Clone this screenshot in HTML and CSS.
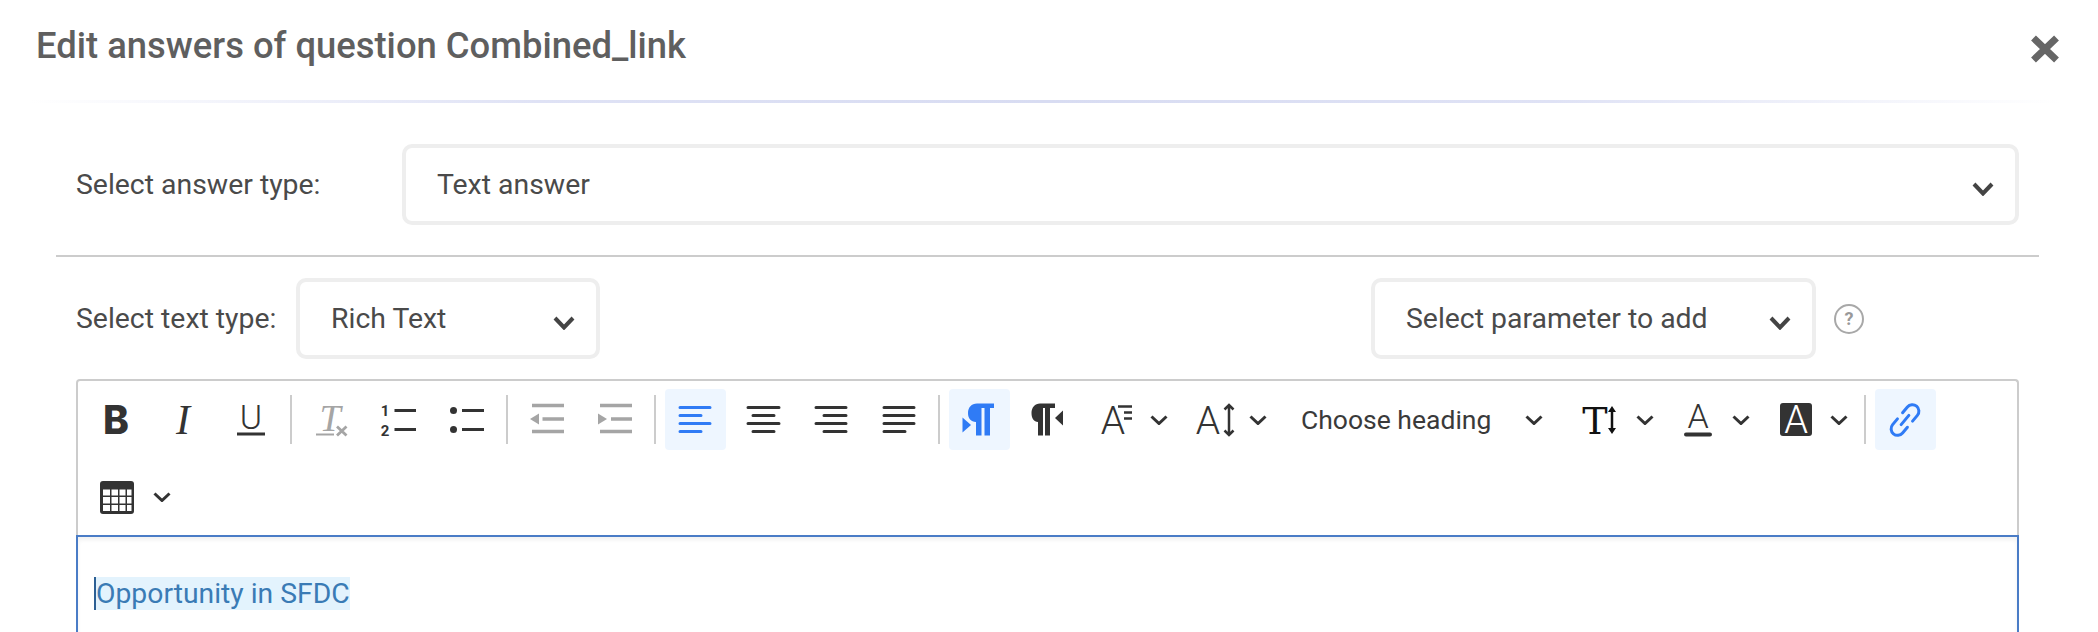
FILE: index.html
```html
<!DOCTYPE html>
<html lang="en">
<head>
    <meta charset="UTF-8">
    <title>Edit answers</title>
    <link rel="stylesheet" href="styles.css">
</head>
<body>
    <svg class="defs" width="0" height="0">
        <symbol id="chev" viewBox="0 0 18 10"><path d="M1.5 1.5L9 8.5L16.5 1.5" fill="none" stroke="#333" stroke-width="3"/></symbol>
    </svg>
    <div class="modal">
        <div class="modal_head">
            <h1 class="title">Edit answers of question Combined_link</h1>
            <svg class="close" viewBox="0 0 30 28"><path d="M3.5 3L26.500 25M26.500 3L3.500 25" stroke="#666" stroke-width="7"/></svg>
        </div>
        <div class="modal_body">
            <div class="row row_answer">
                <label class="label label_answer">Select answer type:</label>
                <div class="select select_full"><span>Text answer</span><svg class="sel_chev" viewBox="0 0 22 14"><path d="M2 2L11 11.500L20 2" fill="none" stroke="#444" stroke-width="4"/></svg></div>
            </div>
            <hr class="divider">
            <div class="row row_text">
                <label class="label label_text">Select text type:</label>
                <div class="select select_type"><span>Rich Text</span><svg class="sel_chev" viewBox="0 0 22 14"><path d="M2 2L11 11.500L20 2" fill="none" stroke="#444" stroke-width="4"/></svg></div>
                <div class="select select_param"><span>Select parameter to add</span><svg class="sel_chev" viewBox="0 0 22 14"><path d="M2 2L11 11.500L20 2" fill="none" stroke="#444" stroke-width="4"/></svg></div>
                <span class="help">?</span>
            </div>
            <div class="editor">
                <div class="toolbar">
                    <!-- basic styles -->
                    <div class="btn"><svg viewBox="0 0 40 40"><text class="t_bold" x="21" y="33.500">B</text></svg></div>
                    <div class="btn"><svg viewBox="0 0 40 40"><text class="t_ital" x="20" y="33.500">I</text></svg></div>
                    <div class="btn"><svg viewBox="0 0 40 40"><text class="t_under" x="20" y="28.500">U</text><rect x="6" y="32.500" width="28" height="3" fill="#333"/></svg></div>
                    <i class="sep"></i>
                    <div class="btn"><svg viewBox="0 0 40 40"><text class="t_clear" x="19" y="30.500">T</text><rect x="5" y="33.500" width="18" height="2" fill="#a5a5a5"/><path d="M26 26.500L35.500 35.500M35.500 26.500L26 35.500" stroke="#a5a5a5" stroke-width="2.800"/></svg></div>
                    <div class="btn"><svg viewBox="0 0 40 40"><text class="t_num" x="6" y="16">1</text><text class="t_num" x="6" y="36">2</text><path d="M15.500 10.500H37M15.500 29.500H37" stroke="#333" stroke-width="3"/></svg></div>
                    <div class="btn"><svg viewBox="0 0 40 40"><circle cx="6.500" cy="10.500" r="3.500" fill="#333"/><circle cx="6.500" cy="29.500" r="3.500" fill="#333"/><path d="M15 10.500H37M15 29.500H37" stroke="#333" stroke-width="3"/></svg></div>
                    <i class="sep"></i>
                    <!-- indent -->
                    <div class="btn"><svg viewBox="0 0 40 40"><path d="M5 5.500H37M15.500 19H37M5 31.500H37" stroke="#a5a5a5" stroke-width="3.500"/><path d="M3 19L12 13.500V24.500Z" fill="#a5a5a5"/></svg></div>
                    <div class="btn"><svg viewBox="0 0 40 40"><path d="M5 5.500H37M16 19H37M5 31.500H37" stroke="#a5a5a5" stroke-width="3.500"/><path d="M12 19L3 13.500V24.500Z" fill="#a5a5a5"/></svg></div>
                    <i class="sep"></i>
                    <!-- align -->
                    <div class="btn on"><svg viewBox="0 0 40 40"><path d="M5 7.500H35M5 15.500H26M5 23.500H35M5 31.500H26" stroke="#2f7bf5" stroke-width="3" stroke-linecap="round"/></svg></div>
                    <div class="btn"><svg viewBox="0 0 40 40"><path d="M5 7.500H36M10 15.500H31M5 23.500H36M10 31.500H31" stroke="#333" stroke-width="3" stroke-linecap="round"/></svg></div>
                    <div class="btn"><svg viewBox="0 0 40 40"><path d="M5 7.500H35M13 15.500H35M5 23.500H35M13 31.500H35" stroke="#333" stroke-width="3" stroke-linecap="round"/></svg></div>
                    <div class="btn"><svg viewBox="0 0 40 40"><path d="M5 7.500H35M5 15.500H35M5 23.500H35M5 31.500H26" stroke="#333" stroke-width="3" stroke-linecap="round"/></svg></div>
                    <i class="sep"></i>
                    <!-- direction -->
                    <div class="btn on"><svg viewBox="0 0 40 40"><path d="M35 3.500V8H31V35.500H25.500V8H22.500V35.500H17V22C12 22 9 18.500 9 13C9 7.500 12.500 3.500 18 3.500Z" fill="#2f7bf5"/><path d="M12 25L3.500 17.500V32.500Z" fill="#2f7bf5"/></svg></div>
                    <div class="btn"><svg viewBox="0 0 40 40"><path d="M28 3.500V8H23V35.500H18V8H16V35.500H11V22C7 22 4.500 18.500 4.500 13C4.500 7.500 8 3.500 13 3.500Z" fill="#333"/><path d="M28 18L36 10.500V25.500Z" fill="#333"/></svg></div>
                    <!-- dropdowns -->
                    <div class="dd dd_font"><svg class="ic40" viewBox="0 0 40 40"><text class="t_a" x="14" y="33.500">A</text><path d="M19 6.500H33M25 12.500H33M25 18.500H33" stroke="#333" stroke-width="2.500"/></svg><svg class="chev"><use href="#chev"/></svg></div>
                    <div class="dd dd_size"><svg class="ic44" viewBox="0 0 44 40"><text class="t_a" x="13" y="33.500">A</text><path d="M34 7V33M29.500 9.500L34 5L38.500 9.500M29.500 30.500L34 35L38.500 30.500" fill="none" stroke="#333" stroke-width="2.500"/></svg><svg class="chev"><use href="#chev"/></svg></div>
                    <div class="dd dd_head"><span>Choose heading</span><svg class="chev"><use href="#chev"/></svg></div>
                    <div class="dd dd_line"><svg class="ic36" viewBox="0 0 36 40"><text class="t_slab" x="12" y="33.500">T</text><path d="M29 10V30" stroke="#111" stroke-width="2.500"/><path d="M29 6L33 12H25ZM29 34L33 28H25Z" fill="#111"/></svg><svg class="chev"><use href="#chev"/></svg></div>
                    <div class="dd dd_color"><svg class="ic30" viewBox="0 0 30 40"><text class="t_a2" x="14" y="28">A</text><rect x="0" y="32.500" width="28" height="4" rx="2" fill="#333"/></svg><svg class="chev"><use href="#chev"/></svg></div>
                    <div class="dd dd_back"><svg class="ic32" viewBox="0 0 32 40"><rect x="0" y="3" width="32" height="33" rx="3" fill="#333"/><text class="t_a3" x="16" y="33">A</text></svg><svg class="chev"><use href="#chev"/></svg></div>
                    <i class="sep sep_link"></i>
                    <div class="btn on"><svg viewBox="0 0 40 40"><g transform="rotate(40 20 20)" fill="none" stroke="#2f7bf5" stroke-width="3" stroke-linecap="round"><path d="M13.500 16V8.500a6.500 6.500 0 0 1 13 0V16"/><path d="M13.500 24V31.500a6.500 6.500 0 0 0 13 0V24"/><path d="M20 14V26"/></g></svg></div>
                    <!-- wraps to second line -->
                    <div class="dd dd_table"><svg class="ic36" viewBox="0 0 36 40"><rect x="1" y="4" width="34" height="33" rx="3" fill="#333"/><path d="M4 12.500H11V18.500H4ZM12.500 12.500H19V18.500H12.500ZM20.500 12.500H26.500V18.500H20.500ZM28 12.500H32.500V18.500H28ZM4 20H11V26.500H4ZM12.500 20H19V26.500H12.500ZM20.500 20H26.500V26.500H20.500ZM28 20H32.500V26.500H28ZM4 28H11V34H4ZM12.500 28H19V34H12.500ZM20.500 28H26.500V34H20.500ZM28 28H32.500V34H28Z" fill="#fff"/></svg><svg class="chev"><use href="#chev"/></svg></div>
                </div>
                <div class="content">
                    <p><span class="caret"></span><a class="link" href="#">Opportunity in SFDC</a></p>
                </div>
            </div>
        </div>
    </div>
</body>
</html>
```

FILE: styles.css
```css
*{margin:0;padding:0;box-sizing:border-box;}
html,body{height:632px;overflow:hidden;background:#fff;}
body{font-family:Roboto,"Liberation Sans",sans-serif;color:#444;}
.defs{position:absolute;}

.modal_head{display:flex;justify-content:space-between;align-items:flex-start;height:103px;margin:0 38px 0 30px;padding:23px 0 0 6px;border-bottom:3px solid;border-image:linear-gradient(to right,rgba(216,220,242,0),#dfe2f5 25%,#d8dcf2 50%,#dfe2f5 75%,rgba(216,220,242,0)) 1;}
.title{font-size:36.400px;line-height:46px;font-weight:500;color:#5f5f5f;}
.close{width:30px;height:28px;margin-top:12px;}

.modal_body{margin:0 59px 0 56px;}
.row{display:flex;align-items:center;padding:0 20px;}
.row_answer{margin-top:41px;}
.row_text{margin-top:21px;}
.label{font-size:28.400px;color:#4a4a4a;white-space:nowrap;}
.label_answer{width:326px;}
.label_text{width:220px;}
.select{display:flex;justify-content:space-between;align-items:center;height:81px;padding:0 21px 0 31px;border:4px solid #eee;border-radius:10px;background:#fff;font-size:28.400px;color:#4a4a4a;}
.select_full{flex:1;}
.select_type{width:304px;}
.select_param{width:445px;margin-left:auto;}
.sel_chev{width:22px;height:14px;margin-top:8px;}
.help{display:flex;justify-content:center;align-items:center;width:30px;height:30px;margin:0 155px 0 18px;border:2.500px solid #a8a8a8;border-radius:50%;font-size:18px;font-weight:700;color:#999;}
.divider{height:2px;margin-top:30px;border:0;background:#ccc;}

.editor{margin:20px 20px 0 20px;}
.toolbar{display:flex;flex-wrap:wrap;align-items:center;row-gap:16px;padding:8px 3px 8px;border:2px solid #ccc;border-bottom:0;border-radius:4px 4px 0 0;}
.btn{display:flex;justify-content:center;align-items:center;width:61px;height:61px;margin:0 3.500px;border-radius:4px;}
.btn.on{background:#eef6ff;}
.btn svg,.ic40{width:40px;height:40px;}
.toolbar svg{overflow:visible;}
.ic44{width:44px;height:40px;}
.ic36{width:36px;height:40px;}
.ic30{width:30px;height:40px;}
.ic32{width:32px;height:40px;}
.sep{width:2px;height:49px;margin:0 5px;background:#ccc;}
.sep_link{margin-left:16px;}

.dd{display:flex;align-items:center;height:61px;}
.chev{width:18px;height:10px;}
.dd_font{margin-left:18px;gap:11px;}
.dd_size{margin-left:27px;gap:10px;}
.dd_head{margin-left:34px;gap:34px;font-size:26.500px;color:#3a3a3a;}
.dd_line{margin-left:40px;gap:17px;}
.dd_color{margin-left:30px;gap:18px;}
.dd_back{margin-left:30px;gap:18px;}
.dd_table{margin-left:18px;gap:18px;}

svg text{text-anchor:middle;}
.t_bold{font:800 39px Inter,sans-serif;fill:#333;}
.t_ital{font:italic 400 42px "Liberation Serif",serif;fill:#333;}
.t_under{font:300 34px Roboto,sans-serif;fill:#333;}
.t_clear{font:italic 400 38px "Liberation Serif",serif;fill:#a5a5a5;}
.t_num{font:700 15px Roboto,sans-serif;fill:#333;}
.t_a{font:300 39px Roboto,sans-serif;fill:#333;}
.t_a2{font:300 34px Roboto,sans-serif;fill:#333;}
.t_a3{font:300 38px Roboto,sans-serif;fill:#fff;}
.t_slab{font:400 38px "DejaVu Serif",serif;fill:#111;}

.content{height:200px;padding:40px 16px 0;border:2px solid #4a7cc6;box-shadow:inset 0 3px 4px rgba(0,0,0,.06);}
.content p{display:flex;font-size:28.300px;line-height:33px;}
.caret{width:2px;height:33px;background:#2c5f94;}
.link{background:#e3f3fd;color:#3a7bb5;text-decoration:none;}
```
